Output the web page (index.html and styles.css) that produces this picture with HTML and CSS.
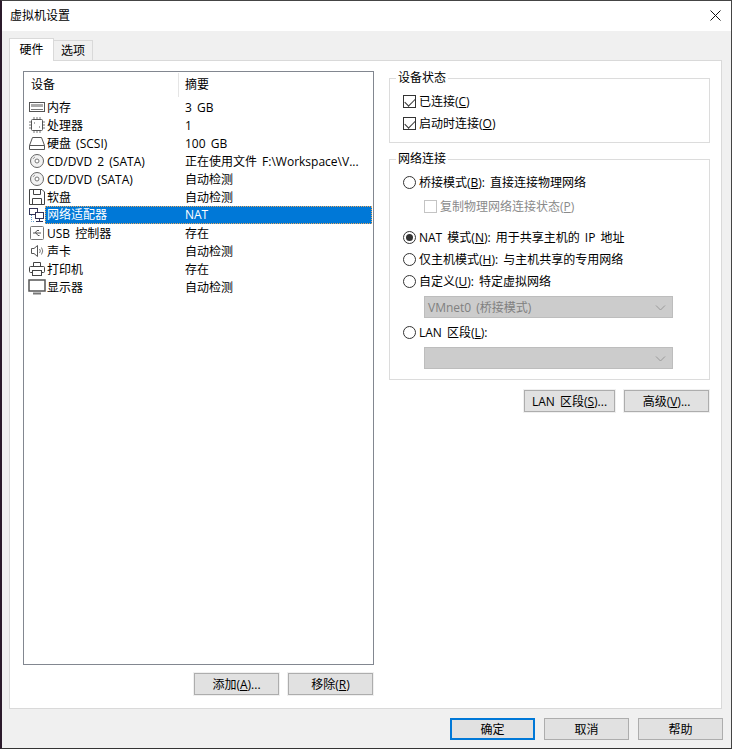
FILE: index.html
```html
<!DOCTYPE html>
<html>
<head>
<meta charset="utf-8">
<title>虚拟机设置</title>
<link rel="stylesheet" href="styles.css">
</head>
<body>

<div class="window">
	<div class="titlebar">
		<span class="title">虚拟机设置</span>
		<svg class="close-x" width="11" height="11" viewBox="0 0 11 11"><path d="M0.5 0.5L10.5 10.5M10.5 0.5L0.5 10.5" stroke="#111" fill="none"/></svg>
	</div>

	<div class="content">
		<div class="tabs">
			<div class="tab active">硬件</div>
			<div class="tab">选项</div>
		</div>

		<div class="panel">
			<!-- left side: device list -->
			<div class="left">
				<div class="devices">
					<div class="list-head">
						<div class="head-a">设备</div>
						<div class="head-b">摘要</div>
					</div>

					<div class="row">
						<svg class="icon" width="18" height="16" viewBox="0 0 18 16"><rect x="1.5" y="3.5" width="15" height="9" fill="#fff" stroke="#555"/><rect x="3" y="5" width="12" height="3" fill="#aaa"/><path d="M3 10.5H15" stroke="#777"/></svg>
						<span class="name">内存</span><span class="sum">3 GB</span>
					</div>
					<div class="row">
						<svg class="icon" width="18" height="16" viewBox="0 0 18 16"><rect x="3.5" y="2.5" width="11" height="11" rx="1" fill="#fff" stroke="#555"/><path d="M1 5H3M1 8H3M1 11H3M15 5H17M15 8H17M15 11H17M6 0V2M9 0V2M12 0V2M6 14V16M9 14V16M12 14V16" stroke="#777"/><path d="M6 6H7M11 10H12" stroke="#555"/></svg>
						<span class="name">处理器</span><span class="sum">1</span>
					</div>
					<div class="row">
						<svg class="icon" width="18" height="16" viewBox="0 0 18 16"><path d="M1.5 10.5L4.5 2.5H13.5L16.5 10.5V14.5H1.5Z" fill="#fff" stroke="#555"/><path d="M1.5 10.5H16.5" stroke="#555"/></svg>
						<span class="name">硬盘 (SCSI)</span><span class="sum">100 GB</span>
					</div>
					<div class="row">
						<svg class="icon" width="18" height="16" viewBox="0 0 18 16"><circle cx="9" cy="8" r="6.5" fill="#f2f2f2" stroke="#666"/><circle cx="9" cy="8" r="2" fill="#fff" stroke="#777"/><path d="M5 6A4.5 4.5 0 0 1 7 4" stroke="#999" fill="none"/></svg>
						<span class="name">CD/DVD 2 (SATA)</span><span class="sum">正在使用文件 F:\Workspace\V...</span>
					</div>
					<div class="row">
						<svg class="icon" width="18" height="16" viewBox="0 0 18 16"><circle cx="9" cy="8" r="6.5" fill="#f2f2f2" stroke="#666"/><circle cx="9" cy="8" r="2" fill="#fff" stroke="#777"/><path d="M5 6A4.5 4.5 0 0 1 7 4" stroke="#999" fill="none"/></svg>
						<span class="name">CD/DVD (SATA)</span><span class="sum">自动检测</span>
					</div>
					<div class="row">
						<svg class="icon" width="18" height="16" viewBox="0 0 18 16"><path d="M1.5 0.5H14L16.5 3V15.5H1.5Z" fill="#fff" stroke="#444"/><path d="M5.5 0.5V5.5H12.5V0.5M4.5 15.5V9.5H13.5V15.5" fill="none" stroke="#444"/></svg>
						<span class="name">软盘</span><span class="sum">自动检测</span>
					</div>
					<div class="row selected">
						<svg class="icon" width="18" height="16" viewBox="0 0 18 16"><rect x="1.5" y="1.5" width="8" height="6" fill="#fff" stroke="#335"/><rect x="7.5" y="5.5" width="8" height="6" fill="#fff" stroke="#335"/><path d="M11.5 11.5V14M8 14.5H15" stroke="#335"/><path d="M3.5 8V14.5H7" stroke="#59c" stroke-dasharray="1 1" fill="none"/></svg>
						<span class="name">网络适配器</span><span class="sum">NAT</span>
					</div>
					<div class="row">
						<svg class="icon" width="18" height="16" viewBox="0 0 18 16"><rect x="2.5" y="1.5" width="13" height="13" rx="1" fill="#fff" stroke="#777"/><path d="M5 8H13M7 8L9 5.5H11M8 8L10 10.5H11.5" stroke="#555" fill="none"/></svg>
						<span class="name">USB 控制器</span><span class="sum">存在</span>
					</div>
					<div class="row">
						<svg class="icon" width="18" height="16" viewBox="0 0 18 16"><path d="M3.5 5.5H6L9.5 2.5V13.5L6 10.5H3.5Z" fill="#fff" stroke="#555"/><path d="M11.5 6A3 3 0 0 1 11.5 10M13.5 4.5A6 6 0 0 1 13.5 11.5" stroke="#777" fill="none"/></svg>
						<span class="name">声卡</span><span class="sum">自动检测</span>
					</div>
					<div class="row">
						<svg class="icon" width="18" height="16" viewBox="0 0 18 16"><path d="M5.5 5.5V1.5H12.5V5.5" fill="#fff" stroke="#444"/><rect x="1.5" y="5.5" width="15" height="6" rx="1" fill="#fff" stroke="#444"/><rect x="4.5" y="9.5" width="9" height="5" fill="#fff" stroke="#444"/></svg>
						<span class="name">打印机</span><span class="sum">存在</span>
					</div>
					<div class="row">
						<svg class="icon" width="18" height="16" viewBox="0 0 18 16"><rect x="1" y="1" width="16" height="11" fill="#fff" stroke="#555" stroke-width="1.5"/><path d="M5 14.5H13" stroke="#777" stroke-width="2"/></svg>
						<span class="name">显示器</span><span class="sum">自动检测</span>
					</div>
				</div>

				<div class="left-btns">
					<button class="btn ring">添加(<u>A</u>)...</button>
					<button class="btn ring">移除(<u>R</u>)</button>
				</div>
			</div>

			<!-- right side: settings -->
			<div class="right">
				<fieldset class="group group-status">
					<legend>设备状态</legend>
					<div class="opt"><span class="check on"></span>已连接(<u>C</u>)</div>
					<div class="opt"><span class="check on"></span>启动时连接(<u>O</u>)</div>
				</fieldset>

				<fieldset class="group group-net">
					<legend>网络连接</legend>
					<div class="opt"><span class="radio"></span>桥接模式(<u>B</u>): 直接连接物理网络</div>
					<div class="opt sub disabled"><span class="check off"></span>复制物理网络连接状态(<u>P</u>)</div>
					<div class="opt gap"><span class="radio on"></span>NAT 模式(<u>N</u>): 用于共享主机的 IP 地址</div>
					<div class="opt"><span class="radio"></span>仅主机模式(<u>H</u>): 与主机共享的专用网络</div>
					<div class="opt"><span class="radio"></span>自定义(<u>U</u>): 特定虚拟网络</div>
					<div class="select">VMnet0 (桥接模式)<svg class="arrow" width="11" height="6" viewBox="0 0 11 6"><path d="M1 0.5L5.5 5L10 0.5" stroke="#999" fill="none"/></svg></div>
					<div class="opt"><span class="radio"></span>LAN 区段(<u>L</u>):</div>
					<div class="select">&nbsp;<svg class="arrow" width="11" height="6" viewBox="0 0 11 6"><path d="M1 0.5L5.5 5L10 0.5" stroke="#999" fill="none"/></svg></div>
				</fieldset>

				<div class="right-btns">
					<button class="btn ring btn-lan">LAN 区段(<u>S</u>)...</button>
					<button class="btn ring">高级(<u>V</u>)...</button>
				</div>
			</div>
		</div>

		<div class="footer">
			<button class="btn default">确定</button>
			<button class="btn">取消</button>
			<button class="btn">帮助</button>
		</div>
	</div>
</div>

</body>
</html>
```

FILE: styles.css
```css
* {
  box-sizing: border-box;
}

body {
  margin: 0;
  width: 732px;
  height: 749px;
  overflow: hidden;
  background: #fff;
  font-family: "Open Sans", "Noto Sans CJK SC", sans-serif;
  font-size: 12px;
  word-spacing: 2px;
  color: #000;
}

u {
  text-underline-offset: 1px;
}

.window {
  height: 749px;
  display: flex;
  flex-direction: column;
  border-top: 1px solid #444;
  border-right: 1px solid #444;
  border-bottom: 1px solid #333;
  border-left: 2px solid #2b1a2b;
}

/* Title bar */
.titlebar {
  height: 30px;
  flex: none;
  display: flex;
  align-items: center;
  justify-content: space-between;
  padding: 0 10px 2px 8px;
  background: #fff;
}

.content {
  flex: 1;
  background: #f0f0f0;
  padding: 7px 8px 0 7px;
  display: flex;
  flex-direction: column;
}

/* Tabs */
.tabs {
  display: flex;
  height: 23px;
  flex: none;
  align-items: flex-end;
  position: relative;
  z-index: 1;
  margin-bottom: -1px;
}

.tab {
  height: 21px;
  width: 39px;
  background: #f0f0f0;
  border: 1px solid #d9d9d9;
  border-left: none;
  text-align: center;
  line-height: 20px;
}

.tab.active {
  height: 23px;
  width: 45px;
  background: #fff;
  border-left: 1px solid #d9d9d9;
  border-bottom: none;
  line-height: 21px;
}

.panel {
  width: 713px;
  height: 649px;
  flex: none;
  background: #fff;
  border: 1px solid #d9d9d9;
  padding: 10px 0 0 13px;
  display: flex;
}

/* Device list */
.left {
  width: 351px;
  flex: none;
}

.devices {
  height: 594px;
  border: 1px solid #828790;
}

.list-head {
  display: flex;
  height: 26px;
  line-height: 26px;
}

.head-a {
  width: 155px;
  height: 24px;
  margin-top: 1px;
  line-height: 24px;
  padding-left: 7px;
  border-right: 1px solid #e5e5e5;
}

.head-b {
  padding-left: 6px;
}

.row {
  display: flex;
  align-items: center;
  height: 18px;
  margin-right: 1px;
  padding-left: 4px;
  white-space: nowrap;
  position: relative;
}

.icon {
  flex: none;
  margin-right: -1px;
}

.name {
  width: 140px;
  flex: none;
  padding-left: 2px;
}

.row.selected .name,
.row.selected .sum {
  background: #0078d7;
  color: #fff;
  height: 18px;
  line-height: 18px;
}

.row.selected .sum {
  flex: 1;
}

/* focus rectangle over the selected row */
.row.selected::after {
  content: '';
  position: absolute;
  left: 21px;
  right: 0;
  top: 0;
  bottom: 0;
  border: 1px dotted #e8a860;
}

.left-btns {
  display: flex;
  justify-content: flex-end;
  gap: 9px;
  margin-top: 8px;
  padding-right: 1px;
}

/* Buttons */
.btn {
  width: 85px;
  height: 22px;
  padding: 0;
  background: #e1e1e1;
  border: 1px solid #adadad;
  font-family: inherit;
  font-size: 12px;
  word-spacing: 2px;
  color: #000;
}

.ring {
  box-shadow: 0 0 0 1px #f0f0f0;
}

/* Right side */
.right {
  width: 321px;
  margin-left: 15px;
  flex: none;
}

.group {
  margin: 0;
  padding: 4px 0 0 13px;
  border: 1px solid #dcdcdc;
  min-width: 0;
}

.group legend {
  padding: 0 2px;
  margin-left: -7px;
  font-size: 12px;
  line-height: 16px;
}

.group-status {
  height: 73px;
  margin-top: -1px;
}

.group-net {
  height: 229px;
  margin-top: 8px;
}

.opt {
  display: flex;
  align-items: center;
  height: 22px;
  white-space: pre;
}

.opt.sub {
  margin-top: 2px;
  padding-left: 21px;
}

.opt.gap {
  margin-top: 9px;
}

.disabled {
  color: #8a8a8a;
}

.check {
  width: 13px;
  height: 13px;
  margin-right: 3px;
  border: 1px solid #333;
  background: #fff;
  flex: none;
  position: relative;
}

.check.on::before {
  content: '';
  position: absolute;
  left: 3px;
  top: 0;
  width: 5px;
  height: 9px;
  border: solid #333;
  border-width: 0 1px 1px 0;
  transform: rotate(45deg);
}

.check.off {
  border-color: #c4c4c4;
}

.radio {
  width: 13px;
  height: 13px;
  margin-right: 3px;
  border: 1px solid #333;
  border-radius: 50%;
  background: #fff;
  flex: none;
  position: relative;
}

.radio.on::before {
  content: '';
  position: absolute;
  left: 2px;
  top: 2px;
  width: 7px;
  height: 7px;
  border-radius: 50%;
  background: #333;
}

.select {
  position: relative;
  width: 249px;
  height: 22px;
  margin: 4px 0 3px 21px;
  padding-left: 3px;
  line-height: 21px;
  background: #cccccc;
  border: 1px solid #bdbdbd;
  color: #808080;
}

.arrow {
  position: absolute;
  right: 6px;
  top: 8px;
}

.right-btns {
  display: flex;
  justify-content: flex-end;
  gap: 9px;
  margin-top: 10px;
  padding-right: 1px;
}

.btn-lan {
  width: 91px;
}

/* Footer */
.footer {
  display: flex;
  justify-content: flex-end;
  gap: 9px;
  padding-top: 9px;
}

.btn.default {
  border: 2px solid #0078d7;
}
```
